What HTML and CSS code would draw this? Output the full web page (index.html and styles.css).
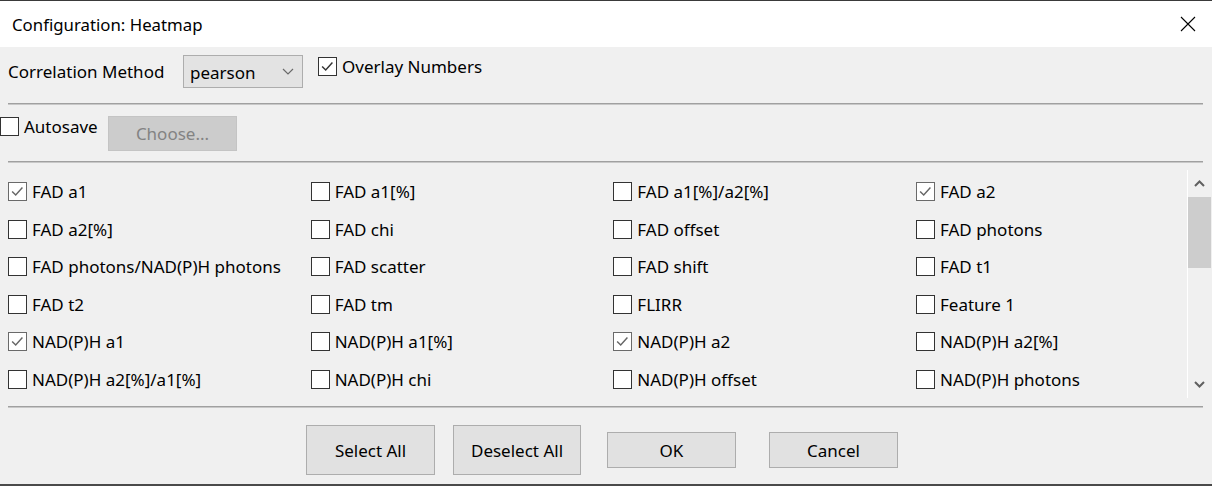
FILE: index.html
```html
<!DOCTYPE html>
<html>
<head>
<meta charset="utf-8">
<link rel="stylesheet" href="styles.css">
</head>
<body>
<div class="window">
  <div class="frame-top"></div>
  <div class="titlebar">
    <span class="title">Configuration: Heatmap</span>
    <svg class="close" width="16" height="16" viewBox="0 0 16 16"><path d="M1 1 L15 15 M15 1 L1 15" stroke="#000" stroke-width="1.1" fill="none"/></svg>
  </div>
  <div class="row1">
    <span class="label">Correlation Method</span>
    <div class="combo"><span>pearson</span>
      <svg class="chev" width="12" height="7" viewBox="0 0 12 7"><path d="M1 1 L6 6 L11 1" stroke="#6a6a6a" stroke-width="1.2" fill="none"/></svg>
    </div>
    <label class="check overlay"><span class="cb dark"><svg viewBox="0 0 19 19"><path d="M3.5 9.5 L7.5 13.5 L15 5" stroke="#333" stroke-width="1.6" fill="none"/></svg></span>Overlay Numbers</label>
  </div>
  <div class="sep"></div>
  <div class="row2">
    <label class="check autosave"><span class="cb"></span>Autosave</label>
    <div class="btn disabled choose">Choose...</div>
  </div>
  <div class="sep sep2"></div>
  <div class="list">
    <div class="grid">
      <label class="check"><span class="cb on"><svg viewBox="0 0 19 19"><path d="M3.5 9.5 L7.5 13.5 L15 5" stroke="#666" stroke-width="1.6" fill="none"/></svg></span>FAD a1</label>
      <label class="check"><span class="cb"></span>FAD a1[%]</label>
      <label class="check"><span class="cb"></span>FAD a1[%]/a2[%]</label>
      <label class="check"><span class="cb on"><svg viewBox="0 0 19 19"><path d="M3.5 9.5 L7.5 13.5 L15 5" stroke="#666" stroke-width="1.6" fill="none"/></svg></span>FAD a2</label>

      <label class="check"><span class="cb"></span>FAD a2[%]</label>
      <label class="check"><span class="cb"></span>FAD chi</label>
      <label class="check"><span class="cb"></span>FAD offset</label>
      <label class="check"><span class="cb"></span>FAD photons</label>

      <label class="check"><span class="cb"></span>FAD photons/NAD(P)H photons</label>
      <label class="check"><span class="cb"></span>FAD scatter</label>
      <label class="check"><span class="cb"></span>FAD shift</label>
      <label class="check"><span class="cb"></span>FAD t1</label>

      <label class="check"><span class="cb"></span>FAD t2</label>
      <label class="check"><span class="cb"></span>FAD tm</label>
      <label class="check"><span class="cb"></span>FLIRR</label>
      <label class="check"><span class="cb"></span>Feature 1</label>

      <label class="check"><span class="cb on"><svg viewBox="0 0 19 19"><path d="M3.5 9.5 L7.5 13.5 L15 5" stroke="#666" stroke-width="1.6" fill="none"/></svg></span>NAD(P)H a1</label>
      <label class="check"><span class="cb"></span>NAD(P)H a1[%]</label>
      <label class="check"><span class="cb on"><svg viewBox="0 0 19 19"><path d="M3.5 9.5 L7.5 13.5 L15 5" stroke="#666" stroke-width="1.6" fill="none"/></svg></span>NAD(P)H a2</label>
      <label class="check"><span class="cb"></span>NAD(P)H a2[%]</label>

      <label class="check"><span class="cb"></span>NAD(P)H a2[%]/a1[%]</label>
      <label class="check"><span class="cb"></span>NAD(P)H chi</label>
      <label class="check"><span class="cb"></span>NAD(P)H offset</label>
      <label class="check"><span class="cb"></span>NAD(P)H photons</label>
    </div>
    <div class="scrollbar">
      <div class="arrow"><svg width="11" height="7" viewBox="0 0 11 7"><path d="M1 6 L5.5 1.5 L10 6" stroke="#606060" stroke-width="2" fill="none"/></svg></div>
      <div class="thumb"></div>
      <div class="track"></div>
      <div class="arrow"><svg width="11" height="7" viewBox="0 0 11 7"><path d="M1 1 L5.5 5.5 L10 1" stroke="#606060" stroke-width="2" fill="none"/></svg></div>
    </div>
  </div>
  <div class="sep sep3"></div>
  <div class="buttons">
    <div class="btn tall b-select">Select All</div>
    <div class="btn tall b-deselect">Deselect All</div>
    <div class="btn b-ok">OK</div>
    <div class="btn b-cancel">Cancel</div>
  </div>
  <div class="frame-bottom"></div>
</div>
</body>
</html>
```
FILE: styles.css
```css
html, body {
  margin: 0;
  padding: 0;
  background: #f0f0f0;
}
body {
  font-family: "Noto Sans", "Open Sans", sans-serif;
  font-size: 17px;
  color: #000;
}
.window {
  width: 1212px;
  height: 486px;
  overflow: hidden;
  display: flex;
  flex-direction: column;
}
.frame-top {
  height: 1px;
  background: #3a3a3a;
}
.titlebar {
  height: 46px;
  background: #fff;
  display: flex;
  align-items: center;
  justify-content: space-between;
  padding: 0 16px 0 12px;
}
.title {
  font-size: 16.8px;
}
.close {
  display: block;
}
.row1 {
  margin-top: 8px;
  height: 33px;
  display: flex;
  align-items: flex-start;
  padding-left: 8px;
}
.label {
  width: 175px;
  line-height: 33px;
  white-space: nowrap;
}
.combo {
  width: 120px;
  height: 33px;
  box-sizing: border-box;
  border: 1px solid #adadad;
  background: #e3e3e3;
  display: flex;
  align-items: center;
  justify-content: space-between;
  padding: 0 8px 0 6px;
}
.combo span {
  position: relative;
  top: 1px;
}
.check {
  display: flex;
  align-items: center;
  gap: 5px;
  white-space: nowrap;
  line-height: 19px;
}
.overlay {
  margin-left: 15px;
  margin-top: 2px;
}
.cb {
  width: 19px;
  height: 19px;
  box-sizing: border-box;
  border: 1px solid #333;
  background: #fff;
  flex: none;
  display: block;
}
.cb svg {
  display: block;
  width: 17px;
  height: 17px;
}
.cb.on {
  border-color: #6a6a6a;
}
.sep {
  margin: 15px 9px 0 8px;
  height: 2px;
  box-sizing: border-box;
  border-top: 1px solid #a0a0a0;
  border-bottom: 1px solid #c8c8c8;
}
.row2 {
  display: flex;
  align-items: flex-start;
  margin-top: 11px;
  height: 35px;
}
.autosave {
  width: 108px;
  margin-top: 1px;
}
.btn {
  box-sizing: border-box;
  border: 1px solid #adadad;
  background: #e1e1e1;
  display: flex;
  align-items: center;
  justify-content: center;
  width: 129px;
  height: 36px;
}
.choose {
  height: 35px;
  background: #cccccc;
  border-color: #c4c4c4;
  color: #838383;
}
.sep2 {
  margin-top: 10px;
}
.list {
  margin-top: 7px;
  height: 228px;
  display: flex;
}
.grid {
  flex: 1;
  overflow: hidden;
  display: grid;
  grid-template-columns: repeat(4, 302.67px);
  grid-auto-rows: 37.5px;
  align-items: center;
  padding: 3px 0 0 8px;
}
.scrollbar {
  width: 24px;
  box-sizing: border-box;
  border-left: 1px solid #ffffff;
  margin-right: 1px;
  display: flex;
  flex-direction: column;
}
.arrow {
  height: 27px;
  display: flex;
  align-items: center;
  justify-content: center;
}
.thumb {
  height: 71px;
  background: #cdcdcd;
}
.track {
  flex: 1;
}
.sep3 {
  margin-top: 8px;
}
.buttons {
  margin-top: 17px;
  height: 50px;
  display: flex;
  align-items: center;
  padding-left: 306px;
}
.tall {
  height: 50px;
}
.b-select { margin-right: 18px; }
.b-deselect { width: 128px; margin-right: 26px; }
.b-ok { margin-right: 33px; }
.frame-bottom {
  margin-top: 9px;
  height: 2px;
  background: #4a4a4a;
}
```
